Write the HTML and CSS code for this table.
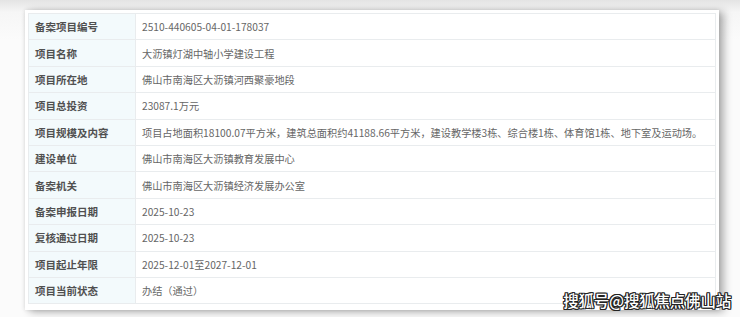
FILE: index.html
```html
<!DOCTYPE html>
<html lang="zh-CN">
<head>
<meta charset="utf-8">
<link rel="stylesheet" href="styles.css">
</head>
<body>
<div class="page">
  <div class="card">
    <table class="info">
      <tr><th>备案项目编号</th><td>2510-440605-04-01-178037</td></tr>
      <tr><th>项目名称</th><td>大沥镇灯湖中轴小学建设工程</td></tr>
      <tr><th>项目所在地</th><td>佛山市南海区大沥镇河西聚豪地段</td></tr>
      <tr><th>项目总投资</th><td>23087.1万元</td></tr>
      <tr><th>项目规模及内容</th><td>项目占地面积18100.07平方米，建筑总面积约41188.66平方米，建设教学楼3栋、综合楼1栋、体育馆1栋、地下室及运动场。</td></tr>
      <tr><th>建设单位</th><td>佛山市南海区大沥镇教育发展中心</td></tr>
      <tr><th>备案机关</th><td>佛山市南海区大沥镇经济发展办公室</td></tr>
      <tr><th>备案申报日期</th><td>2025-10-23</td></tr>
      <tr><th>复核通过日期</th><td>2025-10-23</td></tr>
      <tr><th>项目起止年限</th><td>2025-12-01至2027-12-01</td></tr>
      <tr><th>项目当前状态</th><td>办结（通过）</td></tr>
    </table>
  </div>
  <div class="watermark">搜狐号@搜狐焦点佛山站</div>
</div>
</body>
</html>
```

FILE: styles.css
```css
html, body {
  margin: 0;
  padding: 0;
  background: #ffffff;
}
.page {
  position: relative;
  width: 740px;
  height: 317px;
  overflow: hidden;
  background: linear-gradient(#e4e4e4, #f6f6f6 12px, #fbfbfb 40px);
  padding: 10px 0 0 25px;
  box-sizing: border-box;
}
.card {
  width: 694px;
  height: 300px;
  background: #ffffff;
  box-sizing: border-box;
  padding: 3px 3px;
  box-shadow: 5px 2px 8px rgba(0, 0, 0, 0.3), 0 0 4px rgba(0, 0, 0, 0.12);
}
.info {
  width: 100%;
  border-collapse: collapse;
  font-family: "Noto Sans CJK SC", "Noto Sans", sans-serif;
  font-size: 10.2px;
}
.info tr {
  height: 26.4px;
}
.info th, .info td {
  border: 1px solid #e9ecee;
  padding: 0 0 0 6px;
  text-align: left;
  vertical-align: middle;
  white-space: nowrap;
}
.info th {
  width: 100px;
  background: #f3fafc;
  color: #505050;
  font-weight: bold;
  font-size: 10.5px;
}
.info td {
  color: #666666;
  font-weight: normal;
}
.watermark {
  position: absolute;
  right: 9px;
  bottom: 6px;
  font-family: "Noto Sans CJK SC", sans-serif;
  font-size: 15.5px;
  font-weight: 500;
  color: #ffffff;
  letter-spacing: -0.2px;
  text-shadow: 1px 1px 0 #222, -1px -1px 0 #222, 1px -1px 0 #222, -1px 1px 0 #222, 0 1px 0 #222, 1px 0 0 #222, 0 -1px 0 #222, -1px 0 0 #222;
}
```
